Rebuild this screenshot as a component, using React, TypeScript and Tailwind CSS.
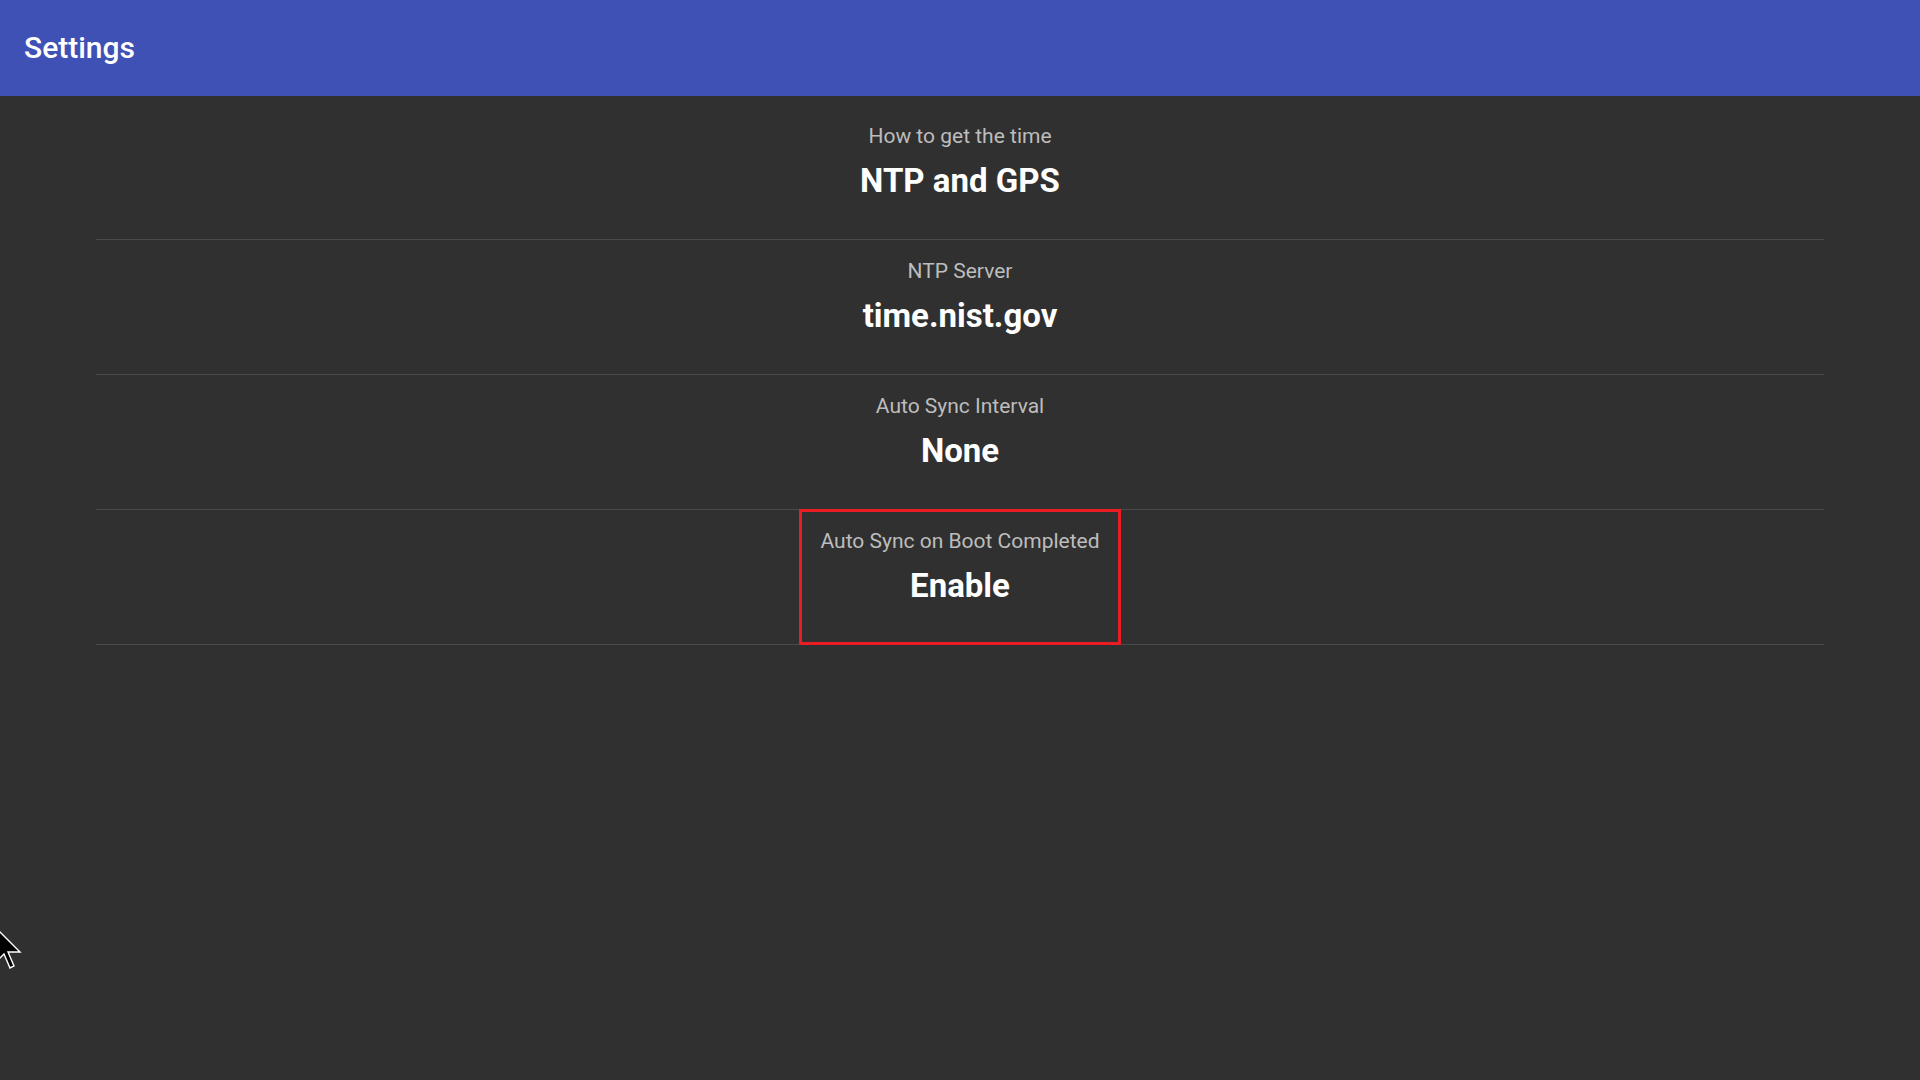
import React from "react";

interface SettingItem {
  label: string;
  value: string;
}

const items: SettingItem[] = [
  { label: "How to get the time", value: "NTP and GPS" },
  { label: "NTP Server", value: "time.nist.gov" },
  { label: "Auto Sync Interval", value: "None" },
  { label: "Auto Sync on Boot Completed", value: "Enable" },
];

const focusedIndex = 3;

const App: React.FC = () => {
  return (
    <div
      className="relative h-screen w-full overflow-hidden bg-[#303030] text-white"
      style={{ fontFamily: "Roboto, 'Noto Sans', sans-serif" }}
    >
      {/* Toolbar */}
      <header className="flex h-[96px] items-center bg-[#3f51b5] pl-[24px]">
        <h1 className="text-[30px] font-medium leading-none text-white">Settings</h1>
      </header>

      {/* Preference list */}
      <div className="mx-[96px] pt-[9px]">
        {items.map((item, i) => (
          <div
            key={item.label}
            className="flex h-[135px] justify-center border-b border-[#4a4a4a]"
          >
            <div
              className={`-my-px flex flex-col items-center border-[3px] px-[18px] pt-[15px] ${
                i === focusedIndex ? "border-[#ec1c24]" : "border-transparent"
              }`}
            >
              <span className="text-[21px] leading-[28px] text-[#bdbdbd]">
                {item.label}
              </span>
              <span className="mt-[11px] text-[33px] font-bold leading-[40px] text-white">
                {item.value}
              </span>
            </div>
          </div>
        ))}
      </div>

      {/* Mouse pointer */}
      <svg
        className="absolute left-[-6px] top-[926px]"
        width="28"
        height="44"
        viewBox="-1 -1 14 22"
      >
        <path
          d="M0 0 L0 17 L4 13 L7 20 L9 19 L6 12 L12 12 Z"
          fill="#000"
          stroke="#fff"
          strokeWidth="0.7"
          strokeLinejoin="miter"
        />
      </svg>
    </div>
  );
};

export default App;
